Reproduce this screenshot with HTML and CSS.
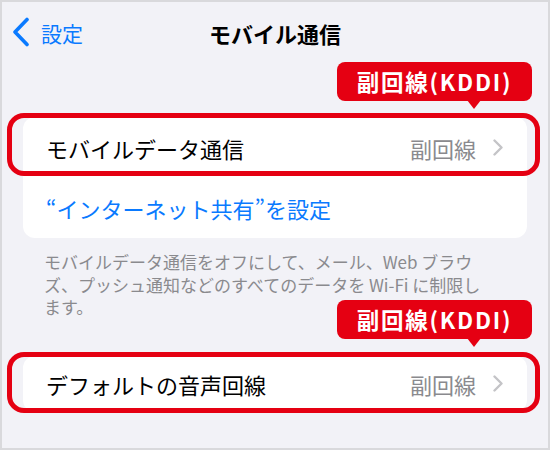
FILE: index.html
```html
<!DOCTYPE html>
<html lang="ja">
<head>
<meta charset="utf-8">
<link rel="stylesheet" href="styles.css">
</head>
<body>
<div class="screen">
  <div class="nav">
    <div class="back">
      <svg class="back-icon" width="18" height="30" viewBox="0 0 18 30"><polyline points="15,2.5 3,15 15,27.5" fill="none" stroke="#0a7aff" stroke-width="3.6" stroke-linecap="round" stroke-linejoin="round"/></svg>
      <span class="back-label">設定</span>
    </div>
    <div class="title">モバイル通信</div>
    <div></div>
  </div>

  <div class="card card-top">
    <div class="row row-first">
      <span class="row-label">モバイルデータ通信</span>
      <span class="row-value">副回線</span>
      <svg class="chev" width="10" height="17" viewBox="0 0 10 17"><polyline points="1.5,1.5 8.5,8.5 1.5,15.5" fill="none" stroke="#c4c4c7" stroke-width="2.4" stroke-linecap="round" stroke-linejoin="round"/></svg>
      <div class="mark mark-1"></div>
      <div class="badge badge-1">副回線(KDDI)</div>
    </div>
    <div class="row row-link">
      <span class="link">“インターネット共有”を設定</span>
    </div>
  </div>

  <p class="footer">モバイルデータ通信をオフにして、メール、Web ブラウ<br>ズ、プッシュ通知などのすべてのデータを Wi-Fi に制限し<br>ます。</p>

  <div class="card card-bottom">
    <div class="row row-single">
      <span class="row-label">デフォルトの音声回線</span>
      <span class="row-value">副回線</span>
      <svg class="chev" width="10" height="17" viewBox="0 0 10 17"><polyline points="1.5,1.5 8.5,8.5 1.5,15.5" fill="none" stroke="#c4c4c7" stroke-width="2.4" stroke-linecap="round" stroke-linejoin="round"/></svg>
      <div class="mark mark-2"></div>
      <div class="badge badge-2">副回線(KDDI)</div>
    </div>
  </div>
</div>
</body>
</html>
```

FILE: styles.css
```css
* { box-sizing: border-box; }
html, body { margin: 0; padding: 0; }
body {
  font-family: "Noto Sans CJK JP", "Noto Sans", sans-serif;
  background: #ffffff;
}
.screen {
  width: 550px;
  height: 450px;
  border: 2px solid #d9d9dc;
  background: #f2f2f7;
  overflow: hidden;
}
.nav {
  height: 62px;
  display: grid;
  grid-template-columns: 1fr auto 1fr;
  align-items: center;
}
.back {
  display: flex;
  align-items: center;
  padding-left: 10px;
  gap: 11px;
  color: #0a7aff;
}
.back-icon { display: block; margin-top: -2px; }
.back-label {
  font-size: 21px;
  line-height: 1;
}
.title {
  font-size: 22px;
  font-weight: 700;
  color: #000;
  line-height: 1;
}
.card {
  margin: 0 21px;
  background: #fff;
  border-radius: 12px;
}
.card-top { margin-top: 53px; }
.card-bottom { margin-top: 37px; }
.row {
  position: relative;
  display: flex;
  align-items: center;
  padding: 0 24px 0 23px;
}
.row-first { height: 61px; }
.row-link { height: 60px; }
.row-single { height: 56px; }
.row-label {
  flex: 1;
  font-size: 22px;
  color: #000;
  line-height: 1;
}
.row-value {
  font-size: 22px;
  color: #8a8a8e;
  line-height: 1;
  margin-right: 17px;
}
.chev { display: block; }
.link {
  font-size: 22px;
  color: #0a7aff;
  line-height: 1;
}
.footer {
  margin: 13px 0 0 0;
  padding-left: 42px;
  font-size: 17px;
  line-height: 22.5px;
  color: #8a8a8e;
  white-space: nowrap;
}
.mark {
  position: absolute;
  left: -16px;
  width: 533px;
  border: 5px solid #e50012;
  border-radius: 17px;
}
.mark-1 { top: -4px; height: 63px; }
.mark-2 { top: -4px; height: 61px; }
.badge {
  position: absolute;
  left: 314px;
  width: 195px;
  height: 39px;
  background: #e50012;
  border-radius: 8px;
  color: #fff;
  font-weight: 700;
  font-size: 22.5px;
  letter-spacing: 1.8px;
  line-height: 39px;
  text-align: center;
}
.badge::after {
  content: "";
  position: absolute;
  left: 130px;
  top: 38px;
  border-left: 7px solid transparent;
  border-right: 7px solid transparent;
  border-top: 9px solid #e50012;
}
.badge-1 { top: -55px; }
.badge-2 { top: -56px; }
```
